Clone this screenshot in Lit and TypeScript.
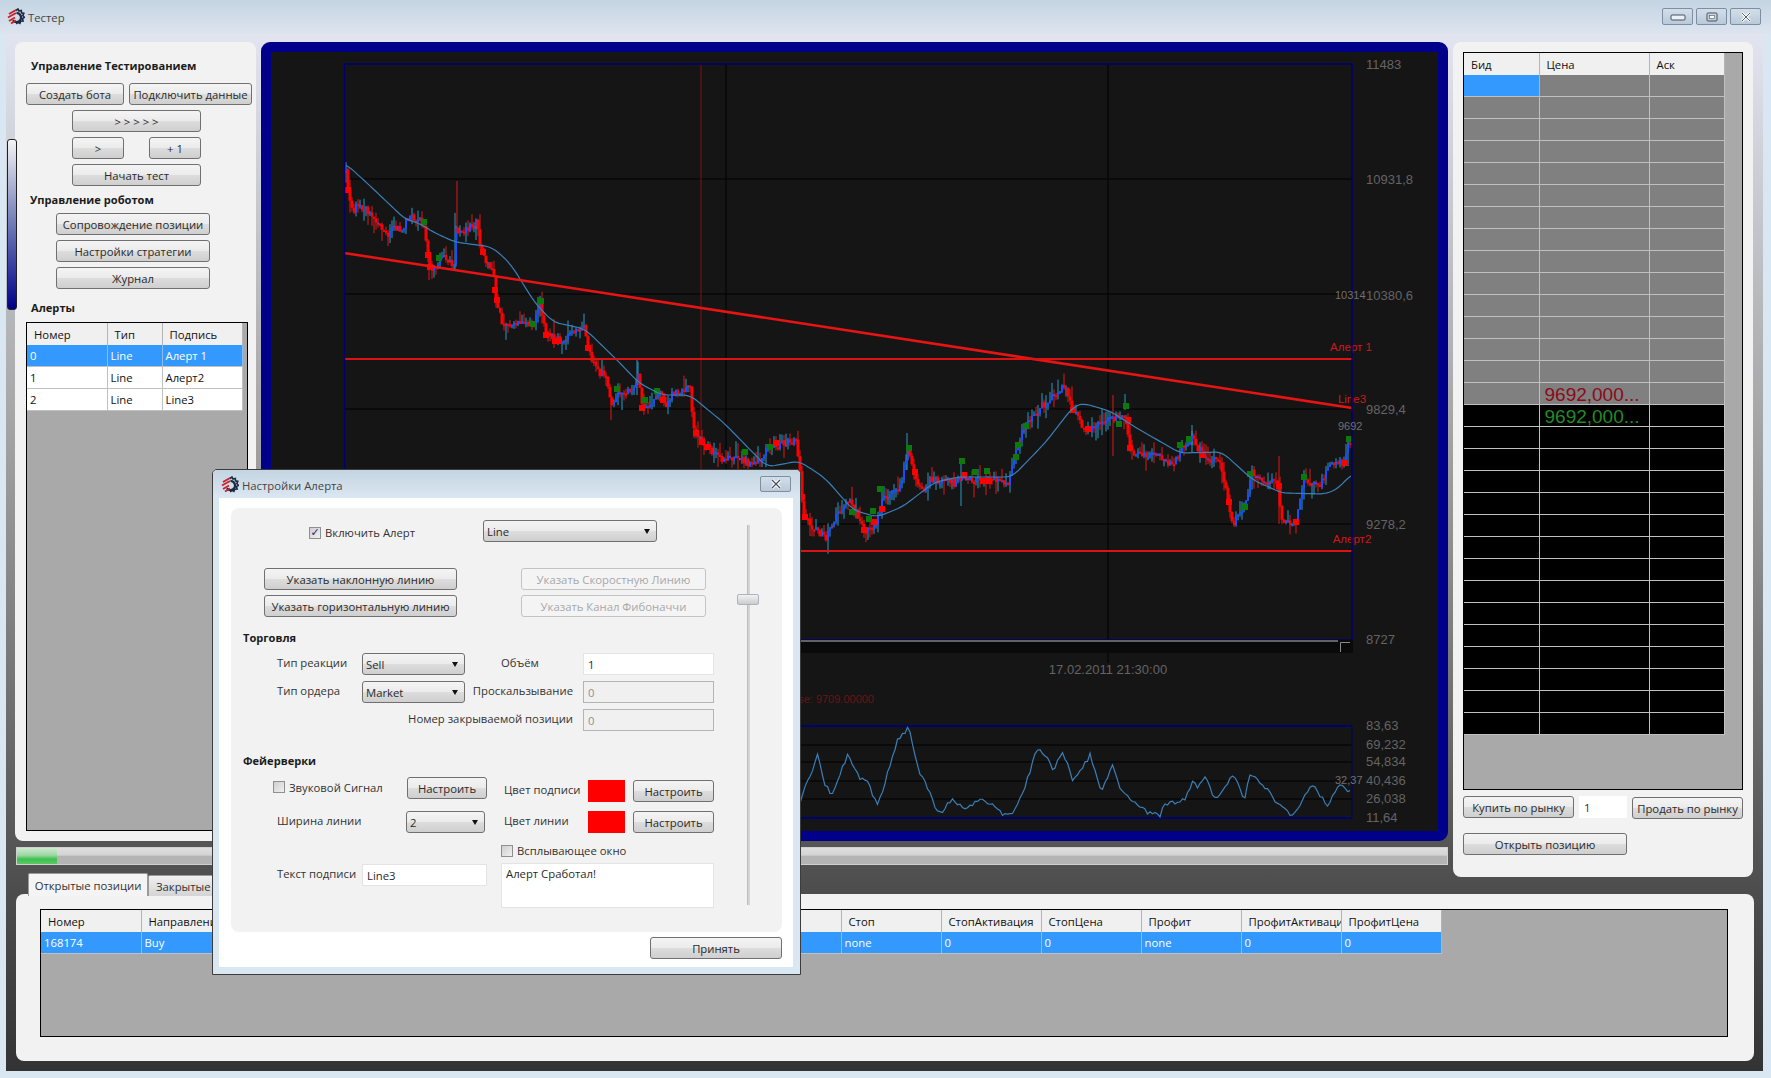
import { LitElement, html, svg, css } from 'lit';
import { customElement } from 'lit/decorators.js';

const UI_FONT = css`"Open Sans", "Noto Sans", sans-serif`;

const controls = css`
  .btn {
    display: flex;
    align-items: center;
    justify-content: center;
    box-sizing: border-box;
    height: 22px;
    border: 1px solid #707070;
    border-radius: 3px;
    background: linear-gradient(#f4f4f4 0%, #ebebeb 50%, #dddddd 50%, #cfcfcf 100%);
    color: #2a2a2a;
    font-size: 11.3px;
    white-space: nowrap;
    flex: none;
  }
  .btn.off {
    background: #f4f4f4;
    border-color: #c4c4c4;
    color: #a8a8a8;
  }
  .select {
    display: flex;
    align-items: center;
    box-sizing: border-box;
    height: 22px;
    padding: 0 3px;
    border: 1px solid #707070;
    border-radius: 3px;
    background: linear-gradient(#f4f4f4 0%, #ebebeb 50%, #dddddd 50%, #cfcfcf 100%);
    color: #2a2a2a;
    font-size: 11.3px;
    flex: none;
  }
  .select::after {
    content: '';
    margin-left: auto;
    margin-right: 3px;
    border-left: 3.5px solid transparent;
    border-right: 3.5px solid transparent;
    border-top: 5px solid #111;
  }
  .input {
    display: flex;
    align-items: center;
    box-sizing: border-box;
    height: 22px;
    padding: 0 4px;
    background: #fff;
    border: 1px solid #e4e4e4;
    color: #2a2a2a;
    font-size: 11.3px;
    flex: none;
  }
  .input.off {
    background: #f0f0f0;
    border-color: #b4b4b4;
    color: #909090;
  }
  .check {
    display: flex;
    align-items: center;
    gap: 4px;
    color: #333;
    font-size: 11.3px;
    white-space: nowrap;
  }
  .check i {
    box-sizing: border-box;
    width: 12px;
    height: 12px;
    border: 1px solid #8e8f8f;
    background: linear-gradient(135deg, #cfcfcf, #f0f0f0);
    color: #22228a;
    font: bold 11px/10px "DejaVu Sans", sans-serif;
    text-align: center;
  }
  .heading {
    color: #1c1c1c;
    font-size: 11.1px;
    font-weight: 700;
    line-height: 16px;
  }
`;

const logo = html`<svg width="18" height="18" viewBox="0 0 18 18">
  <path d="M9 2.5l2 -1.5 1 2 2.3 -.6 .2 2.4 2.3 .6 -1 2.2 1.7 1.7 -2 1.3 .6 2.4 -2.4 .2 -.8 2.2 -2.1 -1.1 -1.5 1.7"
    fill="none" stroke="#1d2a44" stroke-width="1.6"/>
  <path d="M9.5 4.9a4.6 4.6 0 1 1 -3.6 7.4" fill="none" stroke="#1d2a44" stroke-width="2.4"/>
  <path d="M2 6l7 -4M1 9.5l8 -4.5M2 13l6 -3.5M4 15.5l5 -3" stroke="#c8242c" stroke-width="2" fill="none"/>
</svg>`;

type Pt = [number, number];

const closePath: Pt[] = [
  [346, 173], [348, 190], [353, 213], [356, 205], [367, 210], [374, 220], [387, 237], [394, 228], [403, 228],
  [406, 218], [414, 217], [424, 223], [427, 253], [430, 268], [437, 267], [439, 260], [446, 258], [455, 267],
  [456, 225], [460, 233], [476, 223], [480, 243], [485, 263], [494, 273], [495, 293], [498, 307], [503, 327],
  [510, 327], [524, 323], [533, 323], [540, 303], [546, 333], [564, 343], [571, 333], [585, 328], [588, 348],
  [596, 370], [606, 377], [612, 407], [617, 393], [635, 390], [639, 373], [642, 407], [653, 402], [660, 390],
  [665, 407], [671, 395], [683, 388], [690, 388], [694, 430], [703, 443], [712, 453], [721, 460], [742, 458],
  [751, 467], [771, 447], [796, 440], [800, 469], [802, 497], [804, 517], [816, 530], [826, 537], [837, 513],
  [851, 500], [863, 530], [877, 523], [882, 500], [900, 487], [907, 450], [914, 473], [922, 492], [931, 478],
  [955, 483], [961, 477], [986, 480], [1008, 483], [1014, 457], [1024, 427], [1041, 407], [1061, 388], [1067, 390],
  [1073, 410], [1086, 430], [1110, 417], [1126, 420], [1130, 448], [1135, 455], [1151, 455], [1173, 463],
  [1182, 447], [1192, 438], [1204, 457], [1220, 462], [1224, 483], [1233, 523], [1245, 507], [1251, 473],
  [1278, 485], [1282, 523], [1296, 522], [1304, 480], [1318, 488], [1331, 463], [1343, 463], [1350, 440],
];

const avgPath: Pt[] = [
  [346, 164], [367, 183], [406, 220], [417, 222], [435, 233], [455, 242], [492, 247], [510, 263], [535, 303],
  [553, 322], [585, 329], [617, 360], [639, 383], [662, 395], [690, 395], [724, 423], [767, 467], [799, 461],
  [825, 478], [853, 510], [877, 517], [902, 507], [935, 482], [959, 477], [1012, 477], [1045, 443], [1073, 407],
  [1082, 403], [1110, 411], [1135, 427], [1180, 453], [1222, 452], [1253, 480], [1282, 493], [1326, 494],
  [1339, 488], [1351, 474],
];

const indicatorPath: Pt[] = [
  [800, 802], [818, 754], [824, 782], [832, 795], [848, 754], [861, 780], [866, 779], [878, 806], [898, 738],
  [909, 727], [918, 768], [939, 814], [953, 799], [963, 809], [984, 800], [1002, 813], [1014, 812], [1024, 790],
  [1038, 747], [1047, 757], [1053, 770], [1063, 751], [1073, 782], [1090, 755], [1102, 793], [1112, 763],
  [1122, 793], [1147, 812], [1161, 815], [1163, 807], [1186, 798], [1193, 779], [1199, 788], [1205, 775],
  [1216, 802], [1234, 773], [1244, 800], [1250, 777], [1259, 780], [1275, 800], [1293, 817], [1306, 793],
  [1313, 785], [1327, 805], [1341, 784], [1351, 792],
];

const greenMarks: Pt[] = [
  [424, 222], [439, 258], [541, 301], [533, 324], [617, 389], [645, 400], [657, 391], [745, 452], [770, 447],
  [852, 512], [869, 519], [873, 511], [880, 489], [909, 448], [962, 461], [975, 472], [987, 471], [1016, 457],
  [1018, 445], [1026, 426], [1126, 406], [1119, 424], [1180, 445], [1189, 439], [1250, 474], [1245, 507],
  [1304, 477], [1349, 439],
];

const redMarks: Pt[] = [
  [348, 190], [428, 255], [430, 267], [483, 252], [495, 290], [497, 300], [546, 335], [555, 341], [559, 341],
  [588, 348], [642, 408], [663, 400], [696, 433], [702, 442], [777, 443], [707, 447], [802, 497], [805, 517],
  [864, 530], [874, 522], [882, 509], [915, 472], [964, 475], [983, 481], [989, 481], [1073, 410], [1088, 429],
  [1128, 420], [1130, 448], [1203, 455], [1229, 502], [1279, 486], [1296, 522], [1344, 463],
];

// thin tall wicks that stick out of the generated candles
const spikes: [number, number, number, string][] = [
  [457, 181, 240, '#e01818'],
  [455, 213, 270, '#2a9cc8'],
  [476, 222, 240, '#2a9cc8'],
  [429, 250, 280, '#e01818'],
  [611, 395, 420, '#e01818'],
  [637, 360, 395, '#2a9cc8'],
  [907, 433, 470, '#2a9cc8'],
  [961, 460, 506, '#2a9cc8'],
  [1113, 395, 456, '#e01818'],
  [1125, 394, 410, '#2a9cc8'],
  [1192, 431, 445, '#2a9cc8'],
  [1279, 456, 524, '#e01818'],
];

function at(path: Pt[], x: number) {
  for (let i = 1; i < path.length; i++) {
    if (x <= path[i][0]) {
      const [x0, y0] = path[i - 1];
      const [x1, y1] = path[i];
      return y0 + ((y1 - y0) * (x - x0)) / (x1 - x0 || 1);
    }
  }
  return path[path.length - 1][1];
}

let seed = 4711;
function rnd() {
  seed = (seed * 16807) % 2147483647;
  return seed / 2147483647;
}

const candles: { x: number; top: number; h: number; w: number; wt: number; wb: number; body: string; wick: string }[] = [];
let prev = closePath[0][1];
for (let x = 346; x < 1351; x += 2) {
  const y = at(closePath, x) + (rnd() - 0.5) * 8;
  const up = y < prev;
  const top = Math.min(prev, y);
  const h = Math.max(Math.abs(y - prev), 2);
  const doji = Math.abs(y - prev) < 2 && rnd() < 0.35;
  candles.push({
    x,
    top,
    h,
    w: !up && h > 5 ? 3 : 2,
    wt: top - rnd() * rnd() * 16,
    wb: top + h + rnd() * rnd() * 16,
    body: doji ? '#8a2aa0' : up ? '#1a4cff' : '#ff0000',
    wick: up ? '#2a9cc8' : '#e01818',
  });
  prev = y;
}

const toPoints = (p: Pt[]) => p.map(([x, y]) => `${x},${y}`).join(' ');

// the moving average has no corners: average the path over a small window
const smoothAvg: Pt[] = [];
for (let x = 346; x <= 1351; x += 3) {
  let sum = 0;
  for (let d = -6; d <= 6; d += 3) sum += at(avgPath, Math.max(346, x + d));
  smoothAvg.push([x, sum / 5]);
}

// the oscillator wiggles between the swings read off the picture
const noisyIndicator: Pt[] = [];
for (let x = 800; x <= 1351; x += 2.5) {
  noisyIndicator.push([x, Math.min(817, at(indicatorPath, x) + (rnd() - 0.5) * 5)]);
}

const mainTicks: [string, number][] = [
  ['11483', 64], ['10931,8', 179], ['10380,6', 295], ['9829,4', 409], ['9278,2', 524], ['8727', 639],
];
const subTicks: [string, number][] = [
  ['83,63', 726], ['69,232', 745], ['54,834', 762], ['40,436', 781], ['26,038', 799], ['11,64', 818],
];

@customElement('price-chart')
class PriceChart extends LitElement {
  static styles = css`
    :host {
      display: block;
      box-sizing: border-box;
      border: 10px solid #00008b;
      border-radius: 9px;
      background: #151515;
    }
    svg {
      display: block;
    }
    text {
      font-family: "Liberation Sans", Arial, sans-serif;
    }
    .axis {
      font-size: 13px;
      fill: #646464;
    }
    .tag {
      font-size: 11px;
      fill: #707070;
    }
    .alert {
      font-size: 11.5px;
      fill: #d01818;
      text-anchor: middle;
    }
  `;

  render() {
    return html`<svg width="1167" height="779" viewBox="271 52 1167 779">
      ${[179, 294, 409, 524].map((y) => svg`<line x1="345" x2="1352" y1=${y} y2=${y} stroke="#000"/>`)}
      ${[726, 1108].map((x) => svg`<line x1=${x} x2=${x} y1="64" y2="663" stroke="#000"/>`)}
      <line x1="701" x2="701" y1="64" y2="640" stroke="#7a1212"/>

      ${spikes.map(([x, y1, y2, c]) => svg`<line x1=${x} x2=${x} y1=${y1} y2=${y2} stroke=${c}/>`)}
      ${candles.map(
        (c) => svg`<line x1=${c.x} x2=${c.x} y1=${c.wt} y2=${c.wb} stroke=${c.wick} stroke-width="1"/>
          <rect x=${c.x - c.w / 2} y=${c.top} width=${c.w} height=${c.h} fill=${c.body}/>`
      )}
      ${greenMarks.map(([x, y]) => svg`<rect x=${x - 3} y=${y - 3} width="6" height="6" fill="#0b7a0b"/>`)}
      ${redMarks.map(([x, y]) => svg`<rect x=${x - 3} y=${y - 3} width="6" height="6" fill="#ff0000"/>`)}
      <polyline points=${toPoints(smoothAvg)} fill="none" stroke="#3a7fb8" stroke-width="1.2"/>

      <line x1="344" y1="253" x2="1352" y2="408" stroke="#e81414" stroke-width="2.6"/>
      <line x1="344" y1="359" x2="1352" y2="359" stroke="#d81414" stroke-width="2"/>
      <line x1="344" y1="551" x2="1352" y2="551" stroke="#d81414" stroke-width="2"/>
      <text class="alert" x="1351" y="351">Алерт 1</text>
      <text class="alert" x="1352" y="403">Line3</text>
      <text class="alert" x="1352" y="543">Алерт2</text>

      <rect x="344.5" y="64" width="1007.5" height="576" fill="none" stroke="#00006e" stroke-width="1.6"/>
      <rect x="345" y="640" width="1008" height="13" fill="#0a0a0a"/>
      <line x1="345" x2="1338" y1="641" y2="641" stroke="#b4bcc4"/>
      <path d="M1340.5 652V642.5H1350" fill="none" stroke="#8a8a8a"/>

      ${mainTicks.map(([t, y]) => svg`<text class="axis" x="1366" y=${y + 5}>${t}</text>`)}
      <text class="tag" x="1335" y="299">10314</text>
      <text class="tag" x="1338" y="430">9692</text>
      <text class="axis" x="1108" y="674" text-anchor="middle">17.02.2011 21:30:00</text>
      <text x="874" y="703" text-anchor="end" font-size="11" fill="#6a1414">Close: 9709.00000</text>

      ${[745, 762, 781, 799].map((y) => svg`<line x1="345" x2="1352" y1=${y} y2=${y} stroke="#000"/>`)}
      <line x1="345" x2="1352" y1="726" y2="726" stroke="#00006e" stroke-width="2"/>
      <line x1="345" x2="1352" y1="818" y2="818" stroke="#00006e" stroke-width="2"/>
      <line x1="1352" x2="1352" y1="726" y2="818" stroke="#00006e"/>
      <polyline points=${toPoints(noisyIndicator)} fill="none" stroke="#3a7fb8" stroke-width="1.2"/>
      ${subTicks.map(([t, y]) => svg`<text class="axis" x="1366" y=${y + 4}>${t}</text>`)}
      <text class="tag" x="1335" y="784">32,37</text>
    </svg>`;
  }
}

@customElement('alert-dialog')
class AlertDialog extends LitElement {
  static styles = [
    controls,
    css`
      :host {
        display: block;
        box-sizing: border-box;
        position: absolute;
        left: 212px;
        top: 469px;
        width: 589px;
        height: 506px;
        border: 1px solid #3c3c3c;
        border-radius: 5px 5px 0 0;
        background: #d9e7f3;
        font-family: ${UI_FONT};
        z-index: 2;
      }
      .title {
        display: flex;
        align-items: center;
        box-sizing: border-box;
        height: 28px;
        padding: 2px 9px 0 8px;
        gap: 3px;
        background: linear-gradient(#c4d4e2, #dbe7f1);
        border-radius: 4px 4px 0 0;
        color: #444;
        font-size: 11.3px;
      }
      .title .close {
        margin-left: auto;
        margin-top: -2px;
        width: 31px;
        height: 16px;
        box-sizing: border-box;
        border: 1px solid #7f8da0;
        border-radius: 2px;
        background: linear-gradient(#d2deea, #bac9d8);
        display: flex;
        align-items: center;
        justify-content: center;
      }
      .body {
        box-sizing: border-box;
        height: 469px;
        margin: 0 7px 0 6px;
        padding: 10px 11px 0 12px;
        background: #fff;
      }
      .panel {
        display: flex;
        height: 424px;
        padding-top: 12px;
        box-sizing: border-box;
        background: #f2f2f2;
        border-radius: 8px;
      }
      .content {
        width: 506px;
        flex: none;
      }
      .row {
        display: flex;
        align-items: center;
      }
      .pick {
        margin-top: 26px;
        display: flex;
        margin-left: 33px;
      }
      .pick > div {
        display: flex;
        flex-direction: column;
        gap: 5px;
      }
      .lbl {
        box-sizing: border-box;
        padding-bottom: 3px;
        color: #333;
        font-size: 11.3px;
        white-space: nowrap;
      }
      .trade {
        display: grid;
        grid-template-columns: 131px 103px 118px 131px;
        row-gap: 6px;
        align-items: center;
        margin-top: 7px;
      }
      .trade .lbl.first {
        padding-left: 46px;
      }
      .trade .lbl.right {
        text-align: right;
        padding-right: 10px;
      }
      .fire {
        display: flex;
        margin-top: 8px;
      }
      .fire .left {
        width: 270px;
        flex: none;
      }
      .fire .right {
        padding-top: 3px;
        width: 213px;
      }
      .swatch {
        width: 37px;
        height: 22px;
        background: #ff0000;
        flex: none;
      }
      .track {
        position: relative;
        width: 2px;
        height: 380px;
        margin: 5px 0 0 10px;
        background: #d4d4d4;
        border-left: 1px solid #bcbcbc;
      }
      .thumb {
        position: absolute;
        left: -11px;
        top: 69px;
        width: 22px;
        height: 11px;
        box-sizing: border-box;
        border: 1px solid #a8b4c0;
        border-radius: 2px;
        background: linear-gradient(#f2f2f2, #cccccc);
      }
      .foot {
        display: flex;
        justify-content: flex-end;
        margin-top: 5px;
      }
    `,
  ];

  render() {
    return html`
      <div class="title">
        ${logo}<span>Настройки Алерта</span>
        <span class="close">
          <svg width="14" height="10" viewBox="0 0 14 10"><path d="M3 1l8 8M11 1l-8 8" stroke="#fff" stroke-width="3.2"/><path d="M3 1l8 8M11 1l-8 8" stroke="#45505e" stroke-width="1.2"/></svg>
        </span>
      </div>
      <div class="body">
        <div class="panel">
          <div class="content">
            <div class="row" style="margin-left:78px">
              <div class="check" style="width:174px;padding-top:3px"><i>✓</i>Включить Алерт</div>
              <div class="select" style="width:174px">Line</div>
            </div>

            <div class="pick">
              <div style="width:193px">
                <div class="btn">Указать наклонную линию</div>
                <div class="btn">Указать горизонтальную линию</div>
              </div>
              <div style="width:185px;margin-left:64px">
                <div class="btn off">Указать Скоростную Линию</div>
                <div class="btn off">Указать Канал Фибоначчи</div>
              </div>
            </div>

            <div class="heading" style="margin:13px 0 0 12px">Торговля</div>
            <div class="trade">
              <div class="lbl first">Тип реакции</div>
              <div class="select">Sell</div>
              <div class="lbl" style="padding-left:36px">Объём</div>
              <div class="input">1</div>
              <div class="lbl first">Тип ордера</div>
              <div class="select">Market</div>
              <div class="lbl right">Проскальзывание</div>
              <div class="input off">0</div>
              <div class="lbl right" style="grid-column: 1 / span 3">Номер закрываемой позиции</div>
              <div class="input off">0</div>
            </div>

            <div class="heading" style="margin:22px 0 0 12px">Фейерверки</div>
            <div class="fire">
              <div class="left">
                <div class="row" style="margin-left:42px;height:22px">
                  <div class="check" style="width:134px;padding-bottom:2px"><i></i>Звуковой Сигнал</div>
                  <div class="btn" style="width:80px">Настроить</div>
                </div>
                <div class="row" style="margin:12px 0 0 46px">
                  <div class="lbl" style="width:129px">Ширина линии</div>
                  <div class="select" style="width:79px">2</div>
                </div>
                <div class="row" style="margin:31px 0 0 46px">
                  <div class="lbl" style="width:85px">Текст подписи</div>
                  <div class="input" style="width:125px">Line3</div>
                </div>
              </div>
              <div class="right">
                <div class="row">
                  <div class="lbl" style="width:87px;padding-left:3px">Цвет подписи</div>
                  <div class="swatch"></div>
                  <div class="btn" style="width:81px;margin-left:8px">Настроить</div>
                </div>
                <div class="row" style="margin-top:9px">
                  <div class="lbl" style="width:87px;padding-left:3px">Цвет линии</div>
                  <div class="swatch"></div>
                  <div class="btn" style="width:81px;margin-left:8px">Настроить</div>
                </div>
                <div class="check" style="margin-top:10px"><i></i>Всплывающее окно</div>
                <div class="input" style="height:45px;align-items:flex-start;margin-top:5px;padding-top:2px">Алерт Сработал!</div>
              </div>
            </div>
          </div>
          <div class="track"><div class="thumb"></div></div>
        </div>
        <div class="foot"><div class="btn" style="width:132px">Принять</div></div>
      </div>
    `;
  }
}

@customElement('app-root')
class AppRoot extends LitElement {
  static styles = [
    controls,
    css`
      :host {
        display: block;
        position: relative;
        width: 1771px;
        height: 1078px;
        overflow: hidden;
        background: #d9e7f3;
        font-family: ${UI_FONT};
      }
      .titlebar {
        display: flex;
        align-items: center;
        gap: 3px;
        height: 34px;
        padding: 0 10px 0 7px;
        box-sizing: border-box;
        background: linear-gradient(#c4d4e2, #dde4f0);
        color: #444;
        font-size: 11.3px;
      }
      .caption {
        display: flex;
        gap: 3px;
        margin-left: auto;
        margin-top: -1px;
      }
      .caption span {
        display: flex;
        align-items: center;
        justify-content: center;
        box-sizing: border-box;
        width: 31px;
        height: 17px;
        border: 1px solid #7f8da0;
        border-radius: 2px;
        background: linear-gradient(#d2deea, #bac9d8);
      }
      .client {
        position: relative;
        box-sizing: border-box;
        width: 1757px;
        height: 1037px;
        margin-left: 6px;
        padding: 8px 0 0 9px;
        display: grid;
        grid-template-columns: 241px 1187px 300px;
        grid-template-rows: 799px 24px auto;
        column-gap: 5px;
        background: linear-gradient(#e2e5f0 0%, #a4a4a4 38%, #4e4e4e 82%, #333 100%);
      }
      .slider {
        position: absolute;
        left: 1px;
        top: 105px;
        width: 10px;
        height: 171px;
        box-sizing: border-box;
        border: 1px solid #222;
        border-radius: 3px;
        background: linear-gradient(#f4f4f4, #7a86bc 45%, #00008b);
      }
      .left {
        display: flex;
        flex-direction: column;
        align-items: flex-start;
        gap: 5px;
        box-sizing: border-box;
        padding: 16px 0 0 11px;
        background: #f2f2f2;
        border-radius: 8px;
      }
      .left .heading {
        margin-left: 5px;
      }
      .pair {
        display: flex;
      }
      .right {
        grid-row: 1 / span 2;
        grid-column: 3;
        height: 835px;
        box-sizing: border-box;
        padding: 10px 10px 0;
        background: #f2f2f2;
        border-radius: 8px;
        align-self: start;
      }
      .tbl {
        box-sizing: border-box;
        border: 1px solid #000;
        background: #a9a9a9;
        overflow: hidden;
      }
      table {
        table-layout: fixed;
        border-collapse: collapse;
        font-size: 11.3px;
        color: #111;
      }
      th {
        height: 21px;
        padding: 1px 0 0 7px;
        background: #f0f0f0;
        font-weight: 400;
        text-align: left;
        border-right: 1px solid #b4b4b4;
        white-space: nowrap;
        overflow: hidden;
      }
      td {
        height: 21px;
        padding: 0 0 0 3px;
        background: #fff;
        border: 1px solid #c0c0c0;
        border-left: none;
        border-top: none;
        white-space: nowrap;
      }
      tr.ask td {
        background: #808080;
      }
      tr.bid td {
        background: #000;
      }
      tr.sel td,
      tr td.sel {
        background: #3399ff;
        color: #fff;
        border-right-color: #8cbce8;
      }
      td.px {
        height: 18px;
        padding: 3px 0 0 5px;
        font: 19px/18px "Liberation Sans", Arial, sans-serif;
      }
      td.px.hi {
        color: #8b0a1a;
      }
      td.px.lo {
        color: #228b22;
      }
      .trade {
        display: flex;
        align-items: flex-start;
        margin-top: 6px;
      }
      .progress {
        grid-column: 1 / span 2;
        margin: 6px 0 0 1px;
        width: 1432px;
        height: 18px;
        box-sizing: border-box;
        border: 1px solid #d0d0d0;
        background: linear-gradient(#dedede 0%, #d4d4d4 45%, #b4b4b4 50%, #b4b4b4 100%);
      }
      .progress div {
        width: 40px;
        height: 16px;
        background: linear-gradient(#d0e8d0 0%, #9cd8a4 45%, #3cc04c 70%, #5cc868 100%);
      }
      .bottom {
        grid-column: 1 / -1;
        margin: 8px 0 0 1px;
      }
      .tabs {
        display: flex;
        align-items: flex-end;
        padding-left: 12px;
        height: 23px;
      }
      .tab {
        display: flex;
        align-items: center;
        box-sizing: border-box;
        height: 21px;
        padding: 0 7px;
        border: 1px solid #9a9a9a;
        border-bottom: none;
        border-radius: 2px 2px 0 0;
        background: linear-gradient(#f0f0f0, #d4d4d4);
        color: #333;
        font-size: 11.3px;
        white-space: nowrap;
      }
      .tab.on {
        width: 120px;
        justify-content: center;
        height: 23px;
        padding: 0;
        background: #f4f4f4;
      }
      .sheet {
        box-sizing: border-box;
        width: 1738px;
        height: 167px;
        margin-top: -2px;
        padding: 15px 26px 0 24px;
        background: #f2f2f2;
        border-radius: 8px;
      }
    `,
  ];

  private renderBook() {
    const rows = Array.from({ length: 30 }, (_, i) => i);
    return html`<div class="tbl" style="height:738px">
      <table style="width:260px">
        <colgroup><col style="width:75px" /><col style="width:110px" /><col style="width:75px" /></colgroup>
        <tr><th>Бид</th><th>Цена</th><th>Аск</th></tr>
        ${rows.map(
          (i) => html`<tr class=${i < 15 ? 'ask' : 'bid'}>
            <td class=${i === 0 ? 'sel' : ''}></td>
            <td class=${i === 14 ? 'px hi' : i === 15 ? 'px lo' : ''}>${i === 14 || i === 15 ? '9692,000...' : ''}</td>
            <td></td>
          </tr>`
        )}
      </table>
    </div>`;
  }

  private renderPositions() {
    const heads = [
      'Номер', 'Направление', '', '', '', '', '', '',
      'Стоп', 'СтопАктивация', 'СтопЦена', 'Профит', 'ПрофитАктивация', 'ПрофитЦена',
    ];
    const cells = ['168174', 'Buy', '', '', '', '', '', '', 'none', '0', '0', 'none', '0', '0'];
    return html`<div class="tbl" style="height:128px;width:1688px">
      <table style="width:1400px">
        <colgroup>${heads.map(() => html`<col style="width:100px" />`)}</colgroup>
        <tr>${heads.map((h) => html`<th>${h}</th>`)}</tr>
        <tr class="sel">${cells.map((c) => html`<td>${c}</td>`)}</tr>
      </table>
    </div>`;
  }

  render() {
    return html`
      <div class="titlebar">
        ${logo}<span>Тестер</span>
        <div class="caption">
          <span><svg width="16" height="8" viewBox="0 0 16 8"><rect x="1" y="2" width="14" height="5" rx="1" fill="#e8f0f8" stroke="#46505e"/></svg></span>
          <span><svg width="12" height="10" viewBox="0 0 12 10"><rect x="1" y="1" width="10" height="8" rx="1" fill="none" stroke="#46505e"/><rect x="3.5" y="3.5" width="5" height="3" fill="#fff" stroke="#46505e" stroke-width=".6"/></svg></span>
          <span><svg width="14" height="10" viewBox="0 0 14 10"><path d="M3 1l8 8M11 1l-8 8" stroke="#fff" stroke-width="2.6"/><path d="M3 1l8 8M11 1l-8 8" stroke="#55606e"/></svg></span>
        </div>
      </div>

      <div class="client">
        <div class="slider"></div>

        <div class="left">
          <div class="heading" style="height:20px">Управление Тестированием</div>
          <div class="pair" style="gap:5px">
            <div class="btn" style="width:98px">Создать бота</div>
            <div class="btn" style="width:123px">Подключить данные</div>
          </div>
          <div class="btn" style="width:129px;margin-left:46px">&gt; &gt; &gt; &gt; &gt;</div>
          <div class="pair" style="gap:25px;margin-left:46px">
            <div class="btn" style="width:52px">&gt;</div>
            <div class="btn" style="width:52px">+ 1</div>
          </div>
          <div class="btn" style="width:129px;margin-left:46px">Начать тест</div>
          <div class="heading" style="height:16px;margin:1px 0 0 4px">Управление роботом</div>
          <div class="btn" style="width:154px;margin-left:30px">Сопровождение позиции</div>
          <div class="btn" style="width:154px;margin-left:30px">Настройки стратегии</div>
          <div class="btn" style="width:154px;margin-left:30px">Журнал</div>
          <div class="heading" style="height:17px;margin-top:6px">Алерты</div>
          <div class="tbl" style="width:222px;height:509px">
            <table style="width:215px">
              <colgroup><col style="width:80px" /><col style="width:55px" /><col style="width:80px" /></colgroup>
              <tr><th>Номер</th><th>Тип</th><th>Подпись</th></tr>
              <tr class="sel"><td>0</td><td>Line</td><td>Алерт 1</td></tr>
              <tr><td>1</td><td>Line</td><td>Алерт2</td></tr>
              <tr><td>2</td><td>Line</td><td>Line3</td></tr>
            </table>
          </div>
        </div>

        <price-chart></price-chart>

        <div class="right">
          ${this.renderBook()}
          <div class="trade">
            <div class="btn" style="width:111px">Купить по рынку</div>
            <div class="input" style="width:48px;margin-left:5px;border-color:#fff">1</div>
            <div class="btn" style="width:111px;margin:1px 0 0 5px">Продать по рынку</div>
          </div>
          <div class="btn" style="width:164px;margin-top:14px">Открыть позицию</div>
        </div>

        <div class="progress"><div></div></div>

        <div class="bottom">
          <div class="tabs">
            <div class="tab on">Открытые позиции</div>
            <div class="tab">Закрытые позиции</div>
          </div>
          <div class="sheet">${this.renderPositions()}</div>
        </div>
      </div>

      <alert-dialog></alert-dialog>
    `;
  }
}
